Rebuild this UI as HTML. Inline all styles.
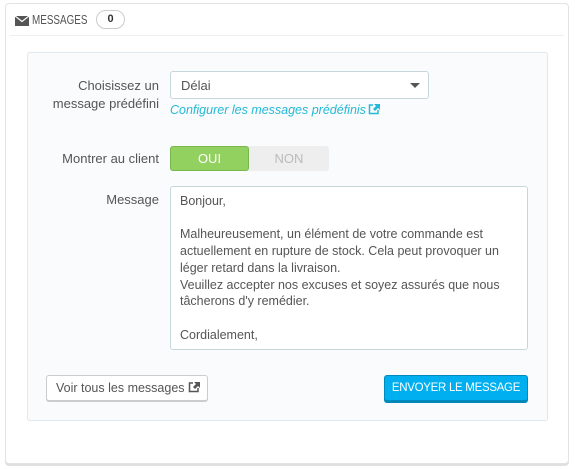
<!DOCTYPE html>
<html><head><meta charset="utf-8"><style>
*{box-sizing:border-box;margin:0;padding:0}
body{width:575px;height:469px;background:#fff;font-family:"Liberation Sans",sans-serif;font-size:12px;color:#555;position:relative;overflow:hidden}
.panel{position:absolute;left:5px;top:3px;width:564px;height:461px;border:1px solid #e3e3e3;border-radius:4px;box-shadow:0 2px 0 #e0e0e0;background:#fff}
.hdr{position:absolute;left:10px;top:6px;width:554px;height:30px;border-bottom:1px solid #eee;font-size:13px;color:#555}
.hdr .t{position:absolute;left:22px;top:6px;font-size:13px;transform:scaleX(.76);transform-origin:left;white-space:nowrap}
.badge{position:absolute;left:86px;top:4px;width:29px;height:19px;border:1px solid #ccc;border-radius:10px;text-align:center;font-size:11px;font-weight:bold;line-height:17px;color:#333}
.well{position:absolute;left:27px;top:52px;width:521px;height:369px;background:#fafbfc;border:1px solid #dfe7ef;border-radius:3px}
.lbl{position:absolute;right:416px;text-align:right;font-size:13px;color:#555;line-height:18px}
.sel{position:absolute;left:170px;top:71px;width:259px;height:28px;background:#fff;border:1px solid #c7d6db;border-radius:3px;font-size:13px;color:#555;padding:6px 10px}
.sel:after{content:"";position:absolute;right:8px;top:11px;border-left:5px solid transparent;border-right:5px solid transparent;border-top:5px solid #555}
.lnk{position:absolute;left:170px;top:103px;font-size:12.5px;font-style:italic;color:#25b9d7}
.tog{position:absolute;left:170px;top:146px;width:159px;height:25px;background:#eee;border-radius:3px;font-size:13px}
.tog .y{position:absolute;left:0;top:0;width:79px;height:25px;background:#92d05f;border:1px solid #77b84c;border-radius:3px;color:#fff;text-align:center;line-height:23px}
.tog .n{position:absolute;left:79px;top:0;width:80px;text-align:center;line-height:25px;color:#bbb}
.ta{position:absolute;left:170px;top:186px;width:358px;height:164px;background:#fff;border:1px solid #c7d6db;border-radius:3px;padding:6px 9px;font-size:12.5px;line-height:16.7px;color:#555}
.btn1{position:absolute;left:46px;top:375px;width:162px;height:26px;background:#fff;border:1px solid #ccc;border-radius:3px;box-shadow:0 1px 0 #ccc;font-size:12.5px;color:#555;padding:5px 9px;white-space:nowrap}
.btn2{position:absolute;left:384px;top:375px;width:144px;height:26px;background:#00aff0;border:1px solid #008abd;border-radius:3px;box-shadow:0 2px 0 #0088b8;color:#fff;font-size:11.5px;text-align:center;line-height:24px;letter-spacing:-.3px;white-space:nowrap}
</style></head><body>
<div class="panel"></div>
<div class="hdr">
<svg style="position:absolute;left:5px;top:10px" width="14" height="10" viewBox="0 0 14 10"><path d="M0 0H14V10H0Z" fill="#555"/><path d="M0 0L7 5.5L14 0" fill="none" stroke="#fff" stroke-width="1.2"/></svg>
<span class="t">MESSAGES</span><span class="badge">0</span></div>
<div class="well"></div>
<div class="lbl" style="top:77px">Choisissez un<br>message prédéfini</div>
<div class="sel">Délai</div>
<div class="lnk">Configurer les messages prédéfinis<svg width="13" height="12" viewBox="0 0 13 12" style="margin-left:2px;vertical-align:-1px"><path d="M5 2H1.5V10.5H10V7" fill="none" stroke="#25b9d7" stroke-width="1.5"/><path d="M6 1H12V7L10 5L7 8L5 6L8 3Z" fill="#25b9d7"/></svg></div>
<div class="lbl" style="top:150px">Montrer au client</div>
<div class="tog"><div class="y">OUI</div><div class="n">NON</div></div>
<div class="lbl" style="top:191px">Message</div>
<div class="ta">Bonjour,<br><br>Malheureusement, un élément de votre commande est actuellement en rupture de stock. Cela peut provoquer un léger retard dans la livraison.<br>Veuillez accepter nos excuses et soyez assurés que nous tâcherons d'y remédier.<br><br>Cordialement,</div>
<div class="btn1">Voir tous les messages<svg width="13" height="12" viewBox="0 0 13 12" style="margin-left:3px;vertical-align:-1px"><path d="M5 2H1.5V10.5H10V7" fill="none" stroke="#555" stroke-width="1.5"/><path d="M6 1H12V7L10 5L7 8L5 6L8 3Z" fill="#555"/></svg></div>
<div class="btn2">ENVOYER LE MESSAGE</div>
</body></html>
